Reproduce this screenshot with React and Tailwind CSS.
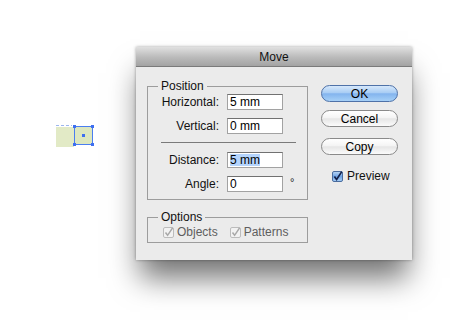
import React from 'react';

const FONT = { fontFamily: '"Liberation Sans", Arial, sans-serif' };

function Field({ label, value, selected, suffix }) {
  return (
    <div className="flex items-center h-[16px]">
      <span className="w-[71px] text-right text-[12px] leading-[14px] text-[#111]">{label}</span>
      <div className="ml-[8px] w-[56px] h-[16px] bg-white border border-[#a2a2a2] border-t-[#717171] flex items-center pl-[2px] text-[12px] leading-[14px] text-black">
        {selected ? <span className="bg-[#b4d4fc] h-[12px] flex items-center">{value}</span> : value}
      </div>
      {suffix && <span className="ml-[7px] text-[11px] leading-[10px] -mt-[4px] text-[#222]">{suffix}</span>}
    </div>
  );
}

function AquaButton({ children, primary }) {
  const cls = primary
    ? 'border-[#4f72a8] bg-[linear-gradient(to_bottom,#d6e8fb_0%,#a9cdf4_45%,#83b4ee_52%,#a6d0f7_100%)]'
    : 'border-[#8a8a8a] bg-[linear-gradient(to_bottom,#ffffff_0%,#f4f4f4_45%,#e6e6e6_52%,#fbfbfb_100%)]';
  return (
    <button className={`w-[77px] h-[17px] rounded-full border text-[12px] leading-[14px] text-black flex items-center justify-center ${cls}`}>
      {children}
    </button>
  );
}

function CheckBox({ disabled }) {
  if (disabled) {
    return (
      <svg width="11" height="11" viewBox="0 0 11 11">
        <rect x="0.5" y="0.5" width="10" height="10" rx="1.5" fill="#f2f2f2" stroke="#bcbcbc" />
        <path d="M2.5 5.5 L4.6 8.3 L9.6 0.8" fill="none" stroke="#a8a8a8" strokeWidth="1.5" />
      </svg>
    );
  }
  return (
    <svg width="11" height="11" viewBox="0 0 11 11">
      <defs>
        <linearGradient id="aq" x1="0" y1="0" x2="0" y2="1">
          <stop offset="0" stopColor="#bcd8f6" />
          <stop offset="0.5" stopColor="#6fa4e6" />
          <stop offset="1" stopColor="#a9d0f6" />
        </linearGradient>
      </defs>
      <rect x="0.5" y="0.5" width="10" height="10" rx="1.5" fill="url(#aq)" stroke="#4a6c9e" />
      <path d="M2.4 5.4 L4.6 8.4 L9.8 0.6" fill="none" stroke="#13204a" strokeWidth="1.7" />
    </svg>
  );
}

export default function App() {
  return (
    <div className="relative w-[450px] h-[324px] bg-white overflow-hidden" style={FONT}>
      {/* object on the artboard */}
      <svg className="absolute left-[52px] top-[120px]" width="46" height="32" viewBox="0 0 46 32">
        <line x1="4" y1="5.5" x2="20" y2="5.5" stroke="#9db7ee" strokeDasharray="3 2" />
        <rect x="4" y="7" width="18" height="20" fill="#e2eac6" />
        <rect x="22.5" y="6.5" width="18" height="18" fill="#dde7bf" stroke="#4a7ef0" />
        <rect x="21" y="5" width="3" height="3" fill="#3e6ff0" />
        <rect x="39" y="5" width="3" height="3" fill="#3e6ff0" />
        <rect x="21" y="23" width="3" height="3" fill="#3e6ff0" />
        <rect x="39" y="23" width="3" height="3" fill="#3e6ff0" />
        <rect x="30" y="14" width="3" height="3" fill="#3e6ff0" />
      </svg>

      <div className="pt-[47px] pl-[136px]">
        <div className="w-[276px] h-[213px] bg-[#ebebeb] flex flex-col shadow-[0_22px_28px_-4px_rgba(0,0,0,0.55),0_0_3px_rgba(0,0,0,0.35)]">
          {/* title bar */}
          <div className="h-[20px] bg-[linear-gradient(to_bottom,#e0e0e0,#bababa_55%,#a3a3a3)] border-b border-[#7a7a7a] flex items-center justify-center text-[12px] text-[#111]">
            Move
          </div>

          <div className="flex pl-[11px] pt-[12px]">
            {/* left column */}
            <div className="w-[161px] flex flex-col">
              <fieldset className="border border-[#9c9c9c] pb-[7px]">
                <legend className="ml-[10px] px-[3px] text-[12px] leading-[14px] text-[#111]">Position</legend>
                <div className="mt-[1px] flex flex-col gap-[8px]">
                  <Field label="Horizontal:" value="5 mm" />
                  <Field label="Vertical:" value="0 mm" />
                </div>
                <div className="ml-[13px] mr-[11px] mt-[8px] h-px bg-[#7a7a7a]" />
                <div className="mt-[9px] flex flex-col gap-[8px]">
                  <Field label="Distance:" value="5 mm" selected />
                  <Field label="Angle:" value="0" suffix="°" />
                </div>
              </fieldset>

              <fieldset className="mt-[10px] border border-[#9c9c9c] pb-[3px]">
                <legend className="ml-[10px] px-[3px] text-[12px] leading-[14px] text-[#111]">Options</legend>
                <div className="mt-[1px] h-[14px] flex items-center pl-[15px] text-[12px] text-[#5e5e5e]">
                  <CheckBox disabled />
                  <span className="ml-[3px]">Objects</span>
                  <span className="ml-[12px] flex"><CheckBox disabled /></span>
                  <span className="ml-[3px]">Patterns</span>
                </div>
              </fieldset>
            </div>

            {/* right column */}
            <div className="ml-[13px] pt-[6px] flex flex-col">
              <AquaButton primary>OK</AquaButton>
              <div className="mt-[8px]"><AquaButton>Cancel</AquaButton></div>
              <div className="mt-[11px]"><AquaButton>Copy</AquaButton></div>
              <div className="mt-[12px] ml-[11px] flex items-center text-[12px] text-[#111]">
                <CheckBox />
                <span className="ml-[4px]">Preview</span>
              </div>
            </div>
          </div>
        </div>
      </div>
    </div>
  );
}
